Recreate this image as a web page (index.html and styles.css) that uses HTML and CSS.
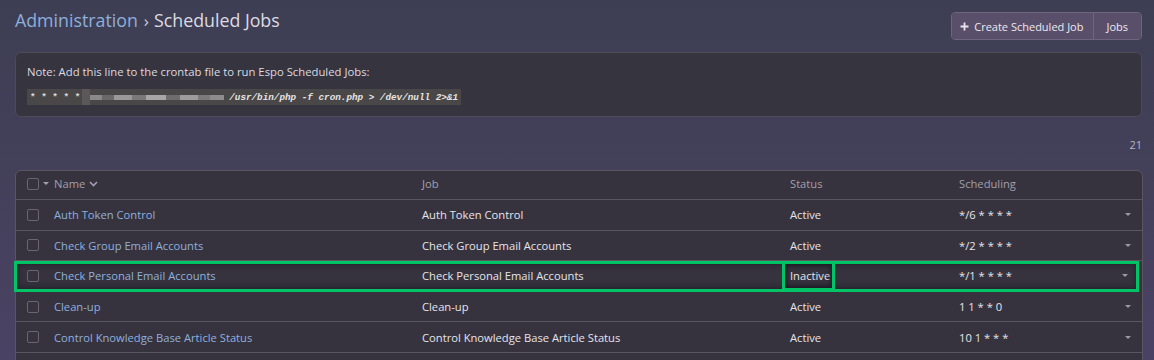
FILE: index.html
```html
<!DOCTYPE html>
<html>
<head>
<meta charset="utf-8">
<link rel="stylesheet" href="styles.css">
</head>
<body>
<div class="page">
  <div class="header">
    <h1 class="title"><a class="crumb">Administration</a><span class="sep">›</span><span>Scheduled Jobs</span></h1>
    <div class="btn-group">
      <button class="btn btn-create"><svg class="plus" width="9" height="9" viewBox="0 0 9 9"><path d="M4.5 0.5v8M0.5 4.5h8" stroke="#e8e4ec" stroke-width="1.8"/></svg>Create Scheduled Job</button>
      <button class="btn btn-jobs">Jobs</button>
    </div>
  </div>

  <div class="note">
    <div class="note-text">Note: Add this line to the crontab file to run Espo Scheduled Jobs:</div>
    <div class="code"><span class="stars">* * * * *</span><span class="blur"><i class="b1"></i><i class="b2"></i><i class="b3"></i><i class="b4"></i><i class="b5"></i><i class="b6"></i><i class="b7"></i><i class="b8"></i><i class="b9"></i><i class="b10"></i></span><span class="cmd">/usr/bin/php -f cron.php &gt; /dev/null 2&gt;&amp;1</span></div>
  </div>

  <div class="count">21</div>

  <div class="table">
    <div class="row head">
      <div class="cell chk"><span class="box"></span><span class="tri"></span></div>
      <div class="cell">Name <svg class="chev" width="9" height="6" viewBox="0 0 9 6"><path d="M1 1l3.5 3.5L8 1" fill="none" stroke="#a39fae" stroke-width="1.6"/></svg></div>
      <div class="cell">Job</div>
      <div class="cell">Status</div>
      <div class="cell">Scheduling</div>
      <div class="cell"></div>
    </div>
    <div class="row">
      <div class="cell chk"><span class="box"></span></div>
      <div class="cell link">Auth Token Control</div>
      <div class="cell">Auth Token Control</div>
      <div class="cell">Active</div>
      <div class="cell">*/6 * * * *</div>
      <div class="cell act"><span class="caret"></span></div>
    </div>
    <div class="row">
      <div class="cell chk"><span class="box"></span></div>
      <div class="cell link">Check Group Email Accounts</div>
      <div class="cell">Check Group Email Accounts</div>
      <div class="cell">Active</div>
      <div class="cell">*/2 * * * *</div>
      <div class="cell act"><span class="caret"></span></div>
    </div>
    <div class="row marked">
      <div class="cell chk"><span class="box"></span></div>
      <div class="cell link">Check Personal Email Accounts</div>
      <div class="cell">Check Personal Email Accounts</div>
      <div class="cell status-mark"><span class="mark-box"></span>Inactive</div>
      <div class="cell">*/1 * * * *</div>
      <div class="cell act"><span class="caret"></span></div>
    </div>
    <div class="row">
      <div class="cell chk"><span class="box"></span></div>
      <div class="cell link">Clean-up</div>
      <div class="cell">Clean-up</div>
      <div class="cell">Active</div>
      <div class="cell">1 1 * * 0</div>
      <div class="cell act"><span class="caret"></span></div>
    </div>
    <div class="row">
      <div class="cell chk"><span class="box"></span></div>
      <div class="cell link">Control Knowledge Base Article Status</div>
      <div class="cell">Control Knowledge Base Article Status</div>
      <div class="cell">Active</div>
      <div class="cell">10 1 * * *</div>
      <div class="cell act"><span class="caret"></span></div>
    </div>
    <div class="row empty"></div>
  </div>
</div>
</body>
</html>
```
FILE: styles.css
```css
html, body {
  margin: 0;
  padding: 0;
  height: 360px;
  overflow: hidden;
}
body {
  background: linear-gradient(180deg, #3d3e54 0%, #434059 45%, #4a4264 100%);
  font-family: "Open Sans", "Noto Sans", sans-serif;
  color: #e3e1e8;
}
.page {
  padding: 0 12px 0 15px;
}
.header {
  display: flex;
  justify-content: space-between;
  align-items: flex-start;
  height: 52px;
}
.title {
  margin: 7px 0 0 0;
  font-size: 17.8px;
  font-weight: 400;
  color: #dddbe2;
  line-height: 26px;
}
.crumb { color: #8eaedb; }
.sep { margin: 0 5px 0 6px; color: #cfcdd6; font-size: 17px; }
.btn-group {
  display: flex;
  margin-top: 12px;
  border: 1px solid #6e6580;
  border-radius: 4px;
  overflow: hidden;
}
.btn {
  background: #5a4f6a;
  color: #ece9f0;
  border: 0;
  font-family: "Open Sans", sans-serif;
  font-size: 11px;
  height: 26px;
  padding: 0 10px 0 8px;
  display: flex;
  align-items: center;
}
.btn-create { border-right: 1px solid #6e6580; }
.btn-jobs { padding: 0 13px 0 12px; }
.plus { margin-right: 5px; }
.note {
  background: #36343f;
  border: 1px solid #4e4a58;
  border-radius: 6px;
  padding: 11px 11px 10px 11px;
  height: 42px;
}
.note-text {
  font-size: 11.3px;
  color: #dcdae0;
  line-height: 16px;
}
.code {
  margin-top: 9px;
  display: inline-flex;
  align-items: center;
  background: #494747;
  height: 16px;
  padding: 0 3px;
  font-family: "Liberation Mono", "DejaVu Sans Mono", monospace;
  font-size: 9.3px;
  font-weight: bold;
  font-style: italic;
  color: #e6e4e6;
}
.stars { font-style: normal; color: #d8d6d8; margin-right: 2px; }
.blur { display: inline-flex; align-items: center; height: 16px; margin-right: 5px; }
.blur i { display: inline-block; height: 5px; }
.b1 { width: 8px; background: #5a5858; height: 16px !important; }
.b2 { width: 12px; background: #8a8888; }
.b3 { width: 12px; background: #6a6868; }
.b4 { width: 18px; background: #9a9898; }
.b5 { width: 14px; background: #7a7878; }
.b6 { width: 20px; background: #a8a6a6; }
.b7 { width: 14px; background: #6e6c6c; }
.b8 { width: 18px; background: #9e9c9c; }
.b9 { width: 12px; background: #7c7a7a; }
.b10 { width: 14px; background: #8e8c8c; }
.count {
  text-align: right;
  font-size: 11px;
  color: #b9b6c2;
  padding: 21px 0 0 0;
  height: 32px;
  line-height: 14px;
}
.table {
  background: #36333f;
  border: 1px solid #5b5560;
  border-radius: 6px 6px 0 0;
  margin-right: -1px;
  font-size: 11.2px;
}
.row {
  position: relative;
  display: grid;
  grid-template-columns: 38px 368px 368px 169px 1fr 30px;
  height: 29.6px;
  align-items: center;
  border-bottom: 1px solid #5b5560;
  color: #e6e4ea;
}
.row.head {
  height: 28px;
  color: #a29fab;
}
.row.head .cell { margin-top: -3px; }
.cell { white-space: nowrap; }
.chk { display: flex; align-items: center; padding-left: 11px; }
.box {
  display: inline-block;
  width: 10px;
  height: 10px;
  border: 1px solid #6d6472;
  border-radius: 2px;
}
.tri {
  display: inline-block;
  margin-left: 4px;
  width: 0;
  height: 0;
  border-left: 3px solid transparent;
  border-right: 3px solid transparent;
  border-top: 3px solid #a39fae;
}
.chev { margin-left: 1px; vertical-align: 1px; }
.link { color: #8fb0dd; }
.act { display: flex; justify-content: flex-start; padding-left: 13px; }
.caret {
  display: inline-block;
  width: 0;
  height: 0;
  border-left: 3px solid transparent;
  border-right: 3px solid transparent;
  border-top: 3px solid #9c98a4;
}
.marked {
  outline: 3px solid #00c465;
  outline-offset: -3px;
  margin: 0 3px 0 -2px;
  padding-left: 2px;
  box-shadow: inset 0 0 6px 3px rgba(20, 18, 26, 0.6);
}
.status-mark {
  position: relative;
  align-self: stretch;
  display: flex;
  align-items: center;
}
.mark-box {
  position: absolute;
  left: -8px;
  top: 0;
  bottom: 0;
  width: 47px;
  border: 3px solid #00c465;
  box-shadow: inset 0 0 4px 2px rgba(20, 18, 26, 0.6);
}
```
